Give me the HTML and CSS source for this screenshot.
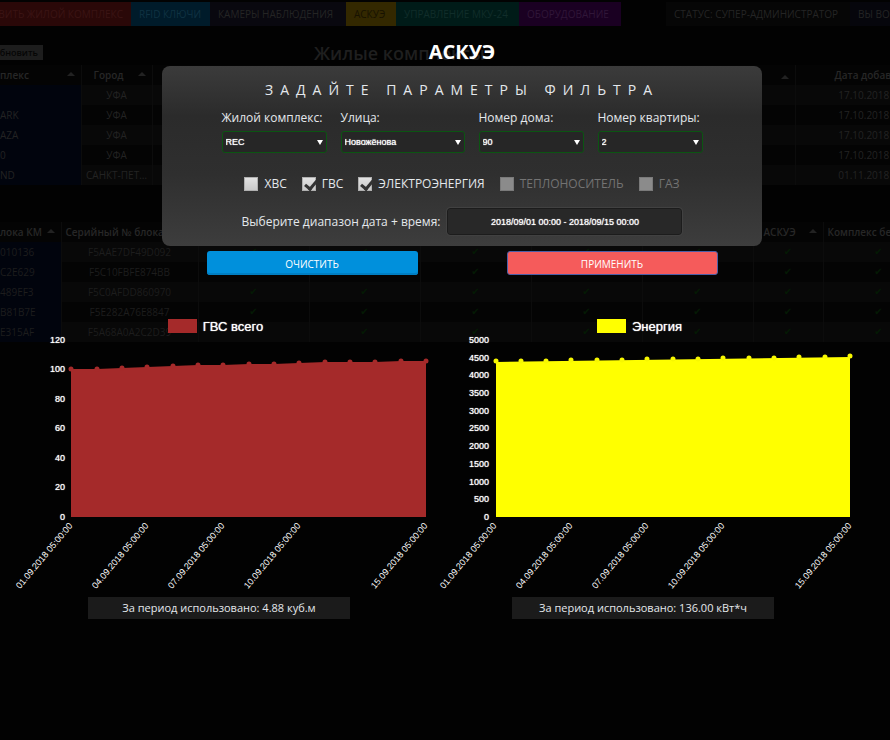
FILE: index.html
```html
<!DOCTYPE html>
<html lang="ru">
<head>
<meta charset="utf-8">
<title>АСКУЭ</title>
<meta name="viewport" content="width=device-width, initial-scale=1">
<link rel="stylesheet" href="styles.css">
</head>
<body>
<div class="app">
  <nav class="nav">
    <a class="nav-item nav-red" href="#">ВИТЬ ЖИЛОЙ КОМПЛЕКС</a>
    <a class="nav-item nav-blue" href="#">RFID КЛЮЧИ</a>
    <a class="nav-item nav-navy" href="#">КАМЕРЫ НАБЛЮДЕНИЯ</a>
    <a class="nav-item nav-gold" href="#">АСКУЭ</a>
    <a class="nav-item nav-teal" href="#">УПРАВЛЕНИЕ МКУ-24</a>
    <a class="nav-item nav-purple" href="#">ОБОРУДОВАНИЕ</a>
    <span class="nav-item nav-status">СТАТУС: СУПЕР-АДМИНИСТРАТОР</span>
    <span class="nav-item nav-user">ВЫ ВО</span>
  </nav>
  <div class="toolbar">
    <button class="refresh" type="button">обновить</button>
    <h2 class="page-title">Жилые комплексы</h2>
  </div>
  <table class="grid">
    <colgroup><col class="w-complex"><col class="w-city"><col class="w-wide"><col class="w-last"></colgroup>
    <thead><tr><th class="sort clip">плекс</th><th class="sort indent">Город</th><th class="sort"></th><th class="date-head">Дата добавл</th></tr></thead>
    <tbody>
      <tr><td class="key"></td><td>УФА</td><td></td><td>17.10.2018</td></tr>
      <tr><td class="key">ARK</td><td>УФА</td><td></td><td>17.10.2018</td></tr>
      <tr><td class="key">AZA</td><td>УФА</td><td></td><td>17.10.2018</td></tr>
      <tr><td class="key">0</td><td>УФА</td><td></td><td>17.10.2018</td></tr>
      <tr><td class="key">ND</td><td>САНКТ-ПЕТ…</td><td></td><td>01.11.2018</td></tr>
    </tbody>
  </table>
  <table class="grid grid-blocks">
    <colgroup><col class="w-block"><col class="w-serial"><col class="w-flag"><col class="w-flag"><col class="w-flag"><col class="w-flag"><col class="w-flag"><col class="w-askue"><col class="w-flag"></colgroup>
    <thead><tr><th class="sort clip">лока КМ</th><th>Серийный № блока</th><th></th><th></th><th></th><th></th><th></th><th class="sort askue-head">АСКУЭ</th><th>Комплекс без</th></tr></thead>
    <tbody>
      <tr><td class="key">010136</td><td>F5AAE7DF49D092</td><td>✔</td><td>✔</td><td>✔</td><td>✔</td><td>✔</td><td>✔</td><td>✔</td></tr>
      <tr><td class="key">C2E629</td><td>F5C10FBFE874BB</td><td>✔</td><td>✔</td><td>✔</td><td>✔</td><td>✔</td><td>✔</td><td>✔</td></tr>
      <tr><td class="key">489EF3</td><td>F5C0AFDD860970</td><td>✔</td><td>✔</td><td>✔</td><td>✔</td><td>✔</td><td>✔</td><td>✔</td></tr>
      <tr><td class="key">B81B7E</td><td>F5E282A76E8847</td><td>✔</td><td>✔</td><td>✔</td><td>✔</td><td>✔</td><td>✔</td><td>✔</td></tr>
      <tr><td class="key">E315AF</td><td>F5A68A0A2C2D39</td><td></td><td>✔</td><td>✔</td><td>✔</td><td>✔</td><td>✔</td><td>✔</td></tr>
    </tbody>
  </table>
</div>

<main class="overlay">
  <form class="dialog">
    <h1 class="dialog-title">АСКУЭ</h1>
    <section class="panel">
      <h2 class="panel-title">ЗАДАЙТЕ ПАРАМЕТРЫ ФИЛЬТРА</h2>
      <div class="fields">
        <div class="field">
          <label for="complex">Жилой комплекс:</label>
          <div class="select"><select id="complex"><option>REC</option></select></div>
        </div>
        <div class="field field-street">
          <label for="street">Улица:</label>
          <div class="select"><select id="street"><option>Новожёнова</option></select></div>
        </div>
        <div class="field">
          <label for="house">Номер дома:</label>
          <div class="select"><select id="house"><option>90</option></select></div>
        </div>
        <div class="field">
          <label for="flat">Номер квартиры:</label>
          <div class="select"><select id="flat"><option>2</option></select></div>
        </div>
      </div>
      <div class="checks">
        <label class="check"><input type="checkbox">ХВС</label>
        <label class="check"><input type="checkbox" checked>ГВС</label>
        <label class="check"><input type="checkbox" checked>ЭЛЕКТРОЭНЕРГИЯ</label>
        <label class="check check-off"><input type="checkbox" disabled>ТЕПЛОНОСИТЕЛЬ</label>
        <label class="check check-off"><input type="checkbox" disabled>ГАЗ</label>
      </div>
      <div class="range">
        <label for="range">Выберите диапазон дата + время:</label>
        <input id="range" type="text" value="2018/09/01 00:00 - 2018/09/15 00:00">
      </div>
    </section>
    <div class="actions">
      <button class="btn btn-clear" type="reset">ОЧИСТИТЬ</button>
      <button class="btn btn-apply" type="button">ПРИМЕНИТЬ</button>
    </div>
  </form>

  <div class="charts">
    <section class="chart">
      <div class="legend"><span class="swatch swatch-red"></span>ГВС всего</div>
      <svg class="plot" viewBox="0 0 424 262">
        <g class="y-labels">
          <text x="58" y="10">120</text><text x="58" y="39">100</text><text x="58" y="69">80</text><text x="58" y="98">60</text><text x="58" y="128">40</text><text x="58" y="157">20</text><text x="58" y="187">0</text>
        </g>
        <path class="area-red" d="M64 184V36L90 36L115 35L140 34L166 33L191 32L216 32L242 31L267 31L292 30L318 29L343 29L368 29L394 28L419 28V184Z"/>
        <path class="dots-red" d="M64 36h0M90 36h0M115 35h0M140 34h0M166 33h0M191 32h0M216 32h0M242 31h0M267 31h0M292 30h0M318 29h0M343 29h0M368 29h0M394 28h0M419 28h0"/>
        <g class="x-labels">
          <text transform="translate(66 193) rotate(-50)">01.09.2018 05:00:00</text>
          <text transform="translate(142 193) rotate(-50)">04.09.2018 05:00:00</text>
          <text transform="translate(218 193) rotate(-50)">07.09.2018 05:00:00</text>
          <text transform="translate(294 193) rotate(-50)">10.09.2018 05:00:00</text>
          <text transform="translate(421 193) rotate(-50)">15.09.2018 05:00:00</text>
        </g>
      </svg>
      <p class="total">За период использовано: 4.88 куб.м</p>
    </section>
    <section class="chart">
      <div class="legend"><span class="swatch swatch-yellow"></span>Энергия</div>
      <svg class="plot" viewBox="0 0 424 262">
        <g class="y-labels">
          <text x="58" y="10">5000</text><text x="58" y="28">4500</text><text x="58" y="45">4000</text><text x="58" y="63">3500</text><text x="58" y="81">3000</text><text x="58" y="98">2500</text><text x="58" y="116">2000</text><text x="58" y="134">1500</text><text x="58" y="152">1000</text><text x="58" y="169">500</text><text x="58" y="187">0</text>
        </g>
        <path class="area-yellow" d="M65 184V29L419 24V184Z"/>
        <path class="dots-yellow" d="M65 28h0M90 28h0M115 28h0M140 27h0M166 27h0M191 27h0M216 26h0M242 26h0M267 26h0M292 25h0M318 25h0M343 25h0M368 24h0M394 24h0M419 23h0"/>
        <g class="x-labels">
          <text transform="translate(66 193) rotate(-50)">01.09.2018 05:00:00</text>
          <text transform="translate(142 193) rotate(-50)">04.09.2018 05:00:00</text>
          <text transform="translate(218 193) rotate(-50)">07.09.2018 05:00:00</text>
          <text transform="translate(294 193) rotate(-50)">10.09.2018 05:00:00</text>
          <text transform="translate(421 193) rotate(-50)">15.09.2018 05:00:00</text>
        </g>
      </svg>
      <p class="total">За период использовано: 136.00 кВт*ч</p>
    </section>
  </div>
</main>
</body>
</html>
```
FILE: styles.css
```css
* { box-sizing: border-box; }
body {
  margin: 0;
  min-height: 100vh;
  position: relative;
  overflow-x: hidden;
  background: #020202;
  color: #e4e8ec;
  font-family: "Open Sans", "Noto Sans", sans-serif;
}
h1, h2, p { margin: 0; }

/* Dimmed page under the dialog */
.app { overflow: hidden; padding-top: 2px; color: #232323; font-size: 10px; }
.nav { display: flex; height: 24px; }
.nav-item {
  flex: none;
  display: flex;
  align-items: center;
  padding: 0 8px;
  color: #242424;
  text-decoration: none;
  white-space: nowrap;
}
.nav-red { width: 131px; justify-content: flex-end; background: #2a0808; color: #3b1414; }
.nav-blue { width: 79px; background: #001b2a; color: #0f3242; }
.nav-navy { width: 136px; background: #09080f; }
.nav-gold { width: 50px; background: #332800; color: #171200; }
.nav-teal { width: 123px; background: #001b18; color: #102d2a; }
.nav-purple { width: 102px; background: #1a0022; color: #301638; }
.nav-status { width: 184px; margin-left: 45px; background: #060606; }
.nav-user { flex: 1; background: #06060c; }
.toolbar { display: flex; align-items: center; height: 39px; padding-top: 14px; }
.refresh {
  display: flex;
  align-items: center;
  justify-content: flex-end;
  width: 43px;
  height: 15px;
  padding: 0 5px 0 0;
  border: 0;
  background: #1d1d1d;
  color: #050505;
  font: 600 9px "Open Sans", sans-serif;
  overflow: hidden;
}
.page-title { margin-left: 271px; font-size: 18px; line-height: 24px; font-weight: 600; color: #1f1f1f; }
.grid { width: 933px; table-layout: fixed; border-collapse: collapse; line-height: 14px; }
.grid-blocks { margin-top: 37px; }
.grid th, .grid td { height: 20px; padding: 0 4px; white-space: nowrap; overflow: hidden; border-right: 1px solid #0c0c0c; }
.grid th { text-align: left; font-weight: 600; color: #272727; background: #040404; }
.grid td { text-align: center; }
.grid tbody tr:nth-child(odd) { background: #080808; }
.grid tbody tr:nth-child(even) { background: #040404; }
.grid .key { background: #01040d; text-align: left; padding-left: 0; }
.grid .clip { padding-left: 0; }
.grid .indent { padding-left: 12px; }
.grid .date-head { padding-left: 39px; }
.grid .askue-head { padding-left: 10px; }
.sort::after {
  content: "";
  float: right;
  margin: 4px 2px 0 0;
  border: 4px solid transparent;
  border-top: 0;
  border-bottom-color: #222;
}
.w-complex { width: 81px; }
.w-city { width: 71px; }
.w-wide { width: 643px; }
.w-block { width: 61px; }
.w-serial { width: 137px; }
.w-flag { width: 111px; }
.w-askue { width: 70px; }
.grid-blocks td { color: #1d1d1d; }
.grid-blocks td:nth-child(n+3) { color: #041a04; font-family: "DejaVu Sans", sans-serif; }

/* Dialog */
.overlay { position: absolute; inset: 0; padding-top: 38px; }
.dialog { width: 600px; max-width: 100%; margin-left: calc(50% - 283px); }
.dialog-title {
  font-size: 20px;
  line-height: 28px;
  font-weight: 700;
  text-align: center;
  color: #fff;
}
.panel {
  padding: 14px 0 11px;
  border-radius: 8px;
  background: linear-gradient(#3b3b3b, #2b2b2b 28%, #2f2f2f 60%, #3d3d3d);
}
.panel-title {
  font-size: 14px;
  line-height: 20px;
  font-weight: 400;
  letter-spacing: 7px;
  text-align: center;
}
.fields { display: flex; justify-content: center; gap: 14px; margin-top: 8px; }
.field { width: 105px; }
.field-street { width: 124px; }
.field label { display: block; font-size: 12px; line-height: 20px; white-space: nowrap; }
.select { position: relative; margin-top: 3px; }
.select::after {
  content: "";
  position: absolute;
  right: 4px;
  top: 9px;
  border: 3px solid transparent;
  border-top: 5px solid #fff;
  border-bottom: 0;
}
.select select {
  display: block;
  width: 100%;
  height: 22px;
  padding: 0 3px;
  appearance: none;
  border: 1px solid #0b5512;
  border-radius: 3px;
  background: #262626;
  color: #fff;
  font: 9px "Liberation Sans", sans-serif;
  text-shadow: 0 0 1px #fff;
}
.checks { display: flex; justify-content: center; gap: 15px; margin-top: 21px; }
.check { display: flex; align-items: center; gap: 6px; font-size: 12px; line-height: 20px; }
.check input {
  appearance: none;
  width: 14px;
  height: 14px;
  margin: 0;
  border: 1px solid #b0b0b0;
  background: linear-gradient(#e2e2e2, #cacaca);
}
.check input:checked::after {
  content: "";
  display: block;
  width: 5px;
  height: 9px;
  margin: 0 0 0 4px;
  border: solid #333;
  border-width: 0 3px 3px 0;
  transform: rotate(40deg);
}
.check-off { color: #737373; }
.check-off input { border-color: #7a7a7a; background: #8b8b8b; }
.range { display: flex; justify-content: center; align-items: center; gap: 7px; margin-top: 14px; }
.range label { font-size: 12px; line-height: 20px; }
.range input {
  width: 235px;
  height: 27px;
  border: 1px solid #1c1c1c;
  border-radius: 3px;
  outline: 1px solid #414141;
  background: #282828;
  color: #fff;
  font: 9px "Liberation Sans", sans-serif;
  text-align: center;
  text-shadow: 0 0 1px #fff;
}
.actions { display: grid; grid-template-columns: 1fr 1fr; justify-items: center; margin-top: 5px; }
.btn {
  width: 211px;
  height: 24px;
  padding: 1px 0 0;
  border: 0;
  border-radius: 3px;
  color: #fff;
  font: 10px "Open Sans", sans-serif;
}
.btn-clear { background: #0090dc; box-shadow: inset 0 -2px #007fc4; }
.btn-apply { background: #f55b5b; border: 1px solid #4b5fa8; }

/* Charts */
.charts { display: grid; grid-template-columns: 1fr 1fr; padding: 0 35px 0 7px; margin-top: 41px; }
.legend {
  display: flex;
  align-items: center;
  justify-content: center;
  gap: 6px;
  height: 20px;
  padding-right: 7px;
  color: #fff;
  font: 13px "Liberation Sans", sans-serif;
  text-shadow: 0 0 1px #fff;
}
.swatch { width: 29px; height: 14px; }
.swatch-red { background: #a52a2a; }
.swatch-yellow { background: #ff0; }
.plot { display: block; width: 100%; margin-top: -3px; }
.plot text {
  fill: #fff;
  font-family: "Liberation Sans", sans-serif;
  font-size: 9px;
  text-anchor: end;
}
.y-labels text { text-shadow: 0 0 1px #fff; }
.area-red { fill: #a52a2a; }
.area-yellow { fill: #ff0; }
.dots-red, .dots-yellow { fill: none; stroke-width: 5px; stroke-linecap: round; }
.dots-red { stroke: #a52a2a; }
.dots-yellow { stroke: #f8f800; }
.total {
  width: 262px;
  margin: 2px auto 0;
  background: #1b1b1b;
  font-size: 11px;
  font-weight: 500;
  line-height: 22px;
  text-align: center;
}
```
